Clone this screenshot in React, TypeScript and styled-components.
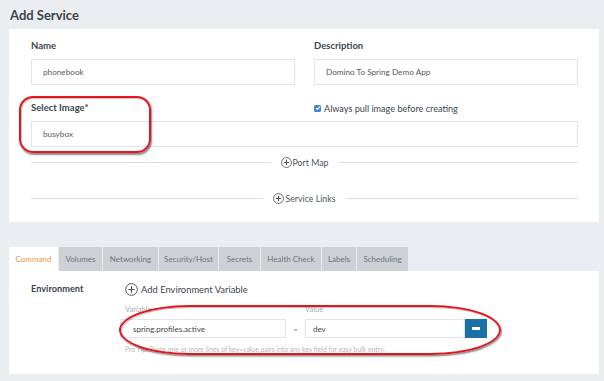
import React from "react";
import styled, { createGlobalStyle } from "styled-components";

const Global = createGlobalStyle`
  html, body { margin: 0; padding: 0; background: #ebeef0; }
  body { font-family: Lato, "Open Sans", sans-serif; color: #3c4650; }
  * { box-sizing: border-box; }
`;

const Page = styled.div`
  position: relative;
  width: 604px;
  height: 381px;
  overflow: hidden;
`;

const Title = styled.h1`
  margin: 0;
  height: 29px;
  padding-left: 10px;
  display: flex;
  align-items: center;
  font-size: 13px;
  font-weight: 700;
  color: #3a444e;
`;

const Panel = styled.section`
  margin: 0 5px 0 9px;
  background: #fff;
  padding: 10px 21px 17px 22px;
`;

const FormGrid = styled.div`
  display: grid;
  grid-template-columns: 264px 264px;
  column-gap: 19px;
`;

const Label = styled.div<{ $top?: number }>`
  font-size: 9.5px;
  font-weight: 700;
  line-height: 14px;
  color: #3c4650;
  margin-top: ${(p) => p.$top ?? 0}px;
  margin-bottom: 6px;
`;

const TextInput = styled.div<{ $span?: boolean }>`
  height: 26px;
  border: 1px solid #e2e4e6;
  padding: 0 11px;
  display: flex;
  align-items: center;
  font-size: 8.2px;
  color: #555b61;
  grid-column: ${(p) => (p.$span ? "1 / span 2" : "auto")};
`;

const CheckRow = styled.label`
  display: flex;
  align-items: center;
  gap: 3px;
  margin-top: 16px;
  margin-bottom: 6px;
  height: 14px;
  font-size: 9.1px;
  color: #3c4650;
`;

const CheckBox = styled.span`
  width: 7px;
  height: 7px;
  border-radius: 1.5px;
  background: #3b87d6;
  display: inline-flex;
  align-items: center;
  justify-content: center;
`;

const Divider = styled.div<{ $top: number }>`
  display: flex;
  align-items: center;
  height: 14px;
  margin-top: ${(p) => p.$top}px;
  gap: 10px;
  font-size: 8.8px;
  color: #4e5660;
`;

const Line = styled.span`
  flex: 1;
  height: 1px;
  background: #dcdfe2;
`;

const LinkLabel = styled.span`
  display: inline-flex;
  align-items: center;
  gap: 1px;
`;

const Tabs = styled.div`
  display: flex;
  gap: 1px;
  margin: 25px 0 0 9px;
  height: 24px;
`;

const Tab = styled.div<{ $active?: boolean; $w: number }>`
  width: ${(p) => p.$w}px;
  display: flex;
  align-items: center;
  justify-content: center;
  font-size: 8px;
  background: ${(p) => (p.$active ? "#fff" : "#cdd1d4")};
  color: ${(p) => (p.$active ? "#f0953d" : "#6c737a")};
`;

const Content = styled.section`
  margin: 0 5px 0 9px;
  background: #fff;
  height: 103px;
  padding: 11px 22px;
  display: grid;
  grid-template-columns: 89px 1fr;
`;

const EnvLabel = styled.div`
  font-size: 9.2px;
  font-weight: 700;
  line-height: 14px;
  color: #3c4650;
`;

const EnvColumn = styled.div`
  display: flex;
  flex-direction: column;
`;

const AddRow = styled.div`
  display: flex;
  align-items: center;
  gap: 3px;
  height: 14px;
  margin-left: 5px;
  font-size: 9.4px;
  color: #3c4650;
`;

const PairGrid = styled.div`
  display: grid;
  grid-template-columns: 166px 19px 182px;
  margin-top: 9px;
`;

const SmallLabel = styled.div<{ $pad?: number }>`
  font-size: 7.5px;
  line-height: 10px;
  color: #a9aeb3;
  padding-left: ${(p) => p.$pad ?? 0}px;
  margin-bottom: 4px;
`;

const SmallInput = styled.div<{ $pad: number }>`
  height: 19px;
  flex: 1;
  border: 1px solid #e2e4e6;
  padding-left: ${(p) => p.$pad}px;
  display: flex;
  align-items: center;
  font-size: 8px;
  color: #3f464d;
`;

const Equals = styled.div`
  display: flex;
  align-items: center;
  justify-content: center;
  height: 19px;
  font-size: 8px;
  color: #888;
`;

const ValueRow = styled.div`
  display: flex;
`;

const RemoveButton = styled.button`
  width: 22px;
  height: 19px;
  border: none;
  padding: 0;
  background: #1b70a8;
  display: flex;
  align-items: center;
  justify-content: center;
  &::after {
    content: "";
    width: 8px;
    height: 2.5px;
    background: #fff;
  }
`;

const Help = styled.div`
  margin-top: 6px;
  margin-left: 5px;
  font-size: 6.8px;
  line-height: 10px;
  color: #b4b8bc;
`;

const Annotation = styled.div<{ $l: number; $t: number; $w: number; $h: number; $r: string }>`
  position: absolute;
  left: ${(p) => p.$l}px;
  top: ${(p) => p.$t}px;
  width: ${(p) => p.$w}px;
  height: ${(p) => p.$h}px;
  border: 2px solid #e3161f;
  border-radius: ${(p) => p.$r};
  box-shadow: 1px 1.5px 1.5px rgba(0, 0, 0, 0.45), inset 1px 1px 1px rgba(0, 0, 0, 0.25);
  pointer-events: none;
`;

const PlusCircle = ({ size }: { size: number }) => (
  <svg width={size} height={size} viewBox="0 0 12 12" fill="none" stroke="#4a525a" strokeWidth="0.9">
    <circle cx="6" cy="6" r="5.4" />
    <path d="M6 3.1v5.8M3.1 6h5.8" strokeWidth="1.1" />
  </svg>
);

const tabs: [string, number][] = [
  ["Command", 49],
  ["Volumes", 43],
  ["Networking", 55],
  ["Security/Host", 59],
  ["Secrets", 41],
  ["Health Check", 60],
  ["Labels", 34],
  ["Scheduling", 51],
];

export default function App() {
  return (
    <Page>
      <Global />
      <Title>Add Service</Title>
      <Panel>
        <FormGrid>
          <div>
            <Label>Name</Label>
            <TextInput>phonebook</TextInput>
          </div>
          <div>
            <Label>Description</Label>
            <TextInput>Domino To Spring Demo App</TextInput>
          </div>
          <Label $top={16}>Select Image*</Label>
          <CheckRow>
            <CheckBox>
              <svg width="6" height="6" viewBox="0 0 6 6" fill="none" stroke="#fff" strokeWidth="1.2">
                <path d="M1 3.1l1.3 1.3L5 1.6" />
              </svg>
            </CheckBox>
            Always pull image before creating
          </CheckRow>
          <TextInput $span>busybox</TextInput>
        </FormGrid>
        <Divider $top={8}>
          <Line />
          <LinkLabel>
            <PlusCircle size={11} />
            Port Map
          </LinkLabel>
          <Line />
        </Divider>
        <Divider $top={22}>
          <Line />
          <LinkLabel>
            <PlusCircle size={11} />
            Service Links
          </LinkLabel>
          <Line />
        </Divider>
      </Panel>
      <Tabs>
        {tabs.map(([t, w], i) => (
          <Tab key={t} $w={w} $active={i === 0}>
            {t}
          </Tab>
        ))}
      </Tabs>
      <Content>
        <EnvLabel>Environment</EnvLabel>
        <EnvColumn>
          <AddRow>
            <PlusCircle size={13} />
            Add Environment Variable
          </AddRow>
          <PairGrid>
            <SmallLabel $pad={5}>Variable</SmallLabel>
            <span />
            <SmallLabel>Value</SmallLabel>
            <SmallInput $pad={12}>spring.profiles.active</SmallInput>
            <Equals>=</Equals>
            <ValueRow>
              <SmallInput $pad={7}>dev</SmallInput>
              <RemoveButton aria-label="remove" />
            </ValueRow>
          </PairGrid>
          <Help>Pro Tip: Paste one or more lines of key=value pairs into any key field for easy bulk entry.</Help>
        </EnvColumn>
      </Content>
      <Annotation $l={19} $t={96} $w={132} $h={57} $r="14px" />
      <Annotation $l={119} $t={305} $w={382} $h={50} $r="70px / 25px" />
    </Page>
  );
}
